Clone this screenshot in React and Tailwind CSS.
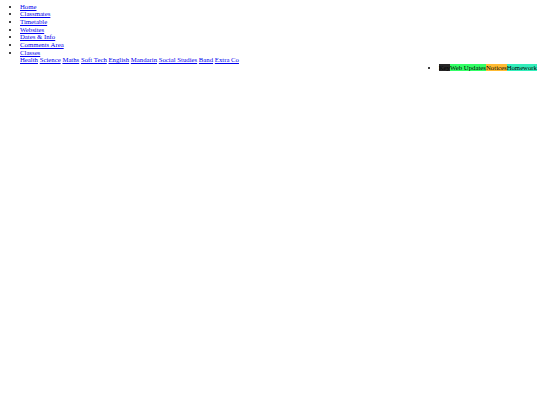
import React from 'react';

const NAV = ['Home', 'Classmates', 'Timetable', 'Websites', 'Dates & Info', 'Comments Area'];
const CLASSES = ['Health', 'Science', 'Maths', 'Soft Tech', 'English', 'Mandarin', 'Social Studies', 'Band', 'Extra Co'];

export default function App() {
  return (
    <div className="min-h-[405px] bg-white text-black font-['Liberation_Serif',serif] text-[6.75px] leading-[7.7px]">
      <ul className="list-disc pl-[20px] pt-[2.5px]">
        {NAV.map((item) => (
          <li key={item}>
            <a href="#" className="text-[#0000ee] underline">{item}</a>
          </li>
        ))}
        <li>
          <a href="#" className="text-[#0000ee] underline">Classes</a>
          <div>
            {CLASSES.map((c, i) => (
              <React.Fragment key={c}>
                <a href="#" className="text-[#0000ee] underline">{c}</a>
                {i < CLASSES.length - 1 ? ' ' : ''}
              </React.Fragment>
            ))}
          </div>
        </li>
      </ul>
      <div className="flex justify-end pr-[3px]">
        <ul className="list-disc">
          <li>
            <span className="bg-[#262626]">Key</span>
            <span className="bg-[#33ff66]">Web Updates</span>
            <span className="bg-[#ffbb33]">Notices</span>
            <span className="bg-[#33eebb]">Homework</span>
          </li>
        </ul>
      </div>
    </div>
  );
}
